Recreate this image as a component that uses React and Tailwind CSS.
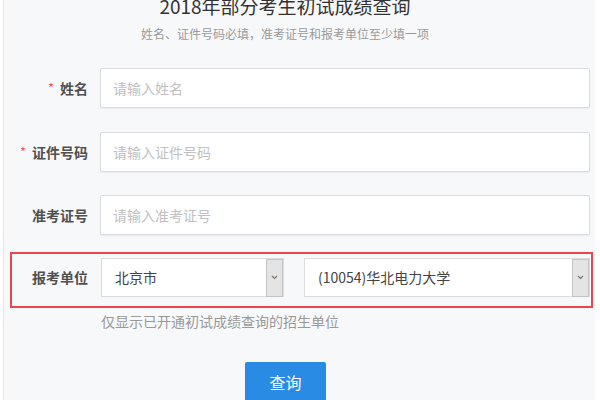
const font = { fontFamily: '"Noto Sans CJK SC", "Liberation Sans", sans-serif' };

function Label({ required, children }) {
  return (
    <div className="w-[84px] shrink-0 flex items-center justify-end text-[14px] font-bold text-[#505050]">
      {required && <span className="text-[#f05a5a] text-[13px] mr-[6px] font-normal">*</span>}
      {children}
    </div>
  );
}

function TextInput({ placeholder }) {
  return (
    <div className="ml-3 flex-1 h-10 bg-white border border-[#dcdcdc] rounded-[2px] shadow-[0_1px_2px_rgba(0,0,0,0.06)] flex items-center px-3 text-[14px] text-[#c0c0c0]">
      {placeholder}
    </div>
  );
}

function Select({ value, className }) {
  return (
    <div className={"h-[39px] bg-white border border-[#dcdcdc] flex items-center justify-between " + className}>
      <span className="pl-[13px] text-[14px] text-[#444]">{value}</span>
      <span className="h-[38px] w-[17px] bg-[#e4e4e4] border border-[#c4c4c4] flex items-center justify-center">
        <svg width="7" height="5" viewBox="0 0 7 5">
          <path d="M1 1 L3.5 3.5 L6 1" fill="none" stroke="#777" strokeWidth="1.2" />
        </svg>
      </span>
    </div>
  );
}

export default function App() {
  return (
    <div className="w-[600px] h-[400px] bg-white overflow-hidden" style={font}>
      <div className="flow-root ml-[3px] w-[592px] h-full bg-[#f7f8fa] border-l border-[#e6e6e6] pr-[5px]">
        <div className="w-[562px] -mt-[8px] h-[28px] leading-[28px] text-center text-[19px] text-[#333]">
          2018年部分考生初试成绩查询
        </div>
        <div className="w-[562px] mt-[4px] h-5 leading-5 text-center text-[12px] text-[#9a9a9a]">
          姓名、证件号码必填，准考证号和报考单位至少填一项
        </div>

        <div className="mt-6 flex items-center h-10">
          <Label required>姓名</Label>
          <TextInput placeholder="请输入姓名" />
        </div>
        <div className="mt-6 flex items-center h-10">
          <Label required>证件号码</Label>
          <TextInput placeholder="请输入证件号码" />
        </div>
        <div className="mt-[23px] flex items-center h-10">
          <Label>准考证号</Label>
          <TextInput placeholder="请输入准考证号" />
        </div>

        <div className="relative mt-[23px] flex items-center h-[39px]">
          <Label>报考单位</Label>
          <Select value="北京市" className="ml-[13px] w-[183px]" />
          <Select value="(10054)华北电力大学" className="ml-[20px] flex-1" />
          <div className="absolute left-[6px] -right-[3px] -top-[6px] -bottom-[11px] border-2 border-[#e8454f] pointer-events-none" />
        </div>

        <div className="mt-[14px] ml-[97px] h-5 leading-5 text-[14px] text-[#999]">
          仅显示已开通初试成绩查询的招生单位
        </div>

        <div className="mt-[31px] ml-[241px] w-[81px] h-10 bg-[#2a8be4] rounded-[2px] flex items-center justify-center text-white text-[16px]">
          查询
        </div>
      </div>
    </div>
  );
}
